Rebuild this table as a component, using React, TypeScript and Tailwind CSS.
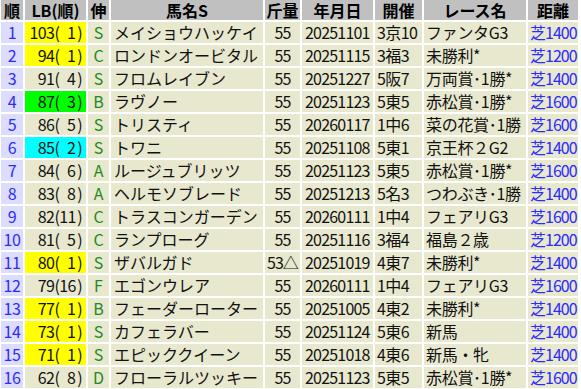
import React from "react";

type Row = {
  no: number;
  lb: number;
  rank: number;
  mark?: "y" | "g" | "c";
  nobi: string;
  name: string;
  kin: string;
  date: string;
  kaisai: string;
  race: string;
  dist: string;
};

const rows: Row[] = [
  { no: 1, lb: 103, rank: 1, mark: "y", nobi: "S", name: "メイショウハッケイ", kin: "55", date: "20251101", kaisai: "3京10", race: "ファンタG3", dist: "芝1400" },
  { no: 2, lb: 94, rank: 1, mark: "y", nobi: "C", name: "ロンドンオービタル", kin: "55", date: "20251115", kaisai: "3福3", race: "未勝利*", dist: "芝1200" },
  { no: 3, lb: 91, rank: 4, nobi: "S", name: "フロムレイブン", kin: "55", date: "20251227", kaisai: "5阪7", race: "万両賞･1勝*", dist: "芝1400" },
  { no: 4, lb: 87, rank: 3, mark: "g", nobi: "B", name: "ラヴノー", kin: "55", date: "20251123", kaisai: "5東5", race: "赤松賞･1勝*", dist: "芝1600" },
  { no: 5, lb: 86, rank: 5, nobi: "S", name: "トリスティ", kin: "55", date: "20260117", kaisai: "1中6", race: "菜の花賞･1勝", dist: "芝1600" },
  { no: 6, lb: 85, rank: 2, mark: "c", nobi: "S", name: "トワニ", kin: "55", date: "20251108", kaisai: "5東1", race: "京王杯２G2", dist: "芝1400" },
  { no: 7, lb: 84, rank: 6, nobi: "A", name: "ルージュブリッツ", kin: "55", date: "20251123", kaisai: "5東5", race: "赤松賞･1勝*", dist: "芝1600" },
  { no: 8, lb: 83, rank: 8, nobi: "A", name: "ヘルモソブレード", kin: "55", date: "20251213", kaisai: "5名3", race: "つわぶき･1勝", dist: "芝1400" },
  { no: 9, lb: 82, rank: 11, nobi: "C", name: "トラスコンガーデン", kin: "55", date: "20260111", kaisai: "1中4", race: "フェアリG3", dist: "芝1600" },
  { no: 10, lb: 81, rank: 5, nobi: "C", name: "ランプローグ", kin: "55", date: "20251116", kaisai: "3福4", race: "福島２歳", dist: "芝1200" },
  { no: 11, lb: 80, rank: 1, mark: "y", nobi: "S", name: "ザバルガド", kin: "53△", date: "20251019", kaisai: "4東7", race: "未勝利*", dist: "芝1400" },
  { no: 12, lb: 79, rank: 16, nobi: "F", name: "エゴンウレア", kin: "55", date: "20260111", kaisai: "1中4", race: "フェアリG3", dist: "芝1600" },
  { no: 13, lb: 77, rank: 1, mark: "y", nobi: "B", name: "フェーダーローター", kin: "55", date: "20251005", kaisai: "4東2", race: "未勝利*", dist: "芝1400" },
  { no: 14, lb: 73, rank: 1, mark: "y", nobi: "S", name: "カフェラバー", kin: "55", date: "20251124", kaisai: "5東6", race: "新馬", dist: "芝1400" },
  { no: 15, lb: 71, rank: 1, mark: "y", nobi: "S", name: "エピッククイーン", kin: "55", date: "20251018", kaisai: "4東6", race: "新馬・牝", dist: "芝1400" },
  { no: 16, lb: 62, rank: 8, nobi: "D", name: "フローラルツッキー", kin: "55", date: "20251123", kaisai: "5東5", race: "赤松賞･1勝*", dist: "芝1600" },
];

const headers = ["順", "LB(順)", "伸", "馬名S", "斤量", "年月日", "開催", "レース名", "距離"];

const lbBg = (m?: Row["mark"]) => {
  if (m === "y") return "bg-[#ffff00]";
  if (m === "g") return "bg-[#00ff00]";
  if (m === "c") return "bg-[#00ffff]";
  return "bg-[#e8e8cf]";
};

export default function App() {
  return (
    <div
      className="w-[581px] h-[389px] overflow-hidden bg-white text-[16px] leading-[21px] text-[#111]"
      style={{ fontFamily: '"Noto Sans CJK JP", "Noto Sans", sans-serif' }}
    >
      <div className="grid grid-cols-[22px_61px_21px_152px_35px_71px_47px_102px_50px] gap-[2px] pl-px">
        {headers.map((h) => (
          <div key={h} className="h-[20px] leading-[20px] bg-[#c0c0c0] text-center font-bold text-black whitespace-nowrap">
            {h}
          </div>
        ))}
        {rows.map((r) => (
          <React.Fragment key={r.no}>
            <div className="h-[21px] bg-[#dcdcfc] text-center text-[#2b2bff] tracking-[-0.5px]">{r.no}</div>
            <div className={`h-[21px] ${lbBg(r.mark)} flex justify-end pr-[4px] whitespace-nowrap tracking-[-0.6px]`}>
              <span>{r.lb}(</span>
              <span className="inline-block w-[16px] text-right">{r.rank}</span>
              <span className="pl-[2px]">)</span>
            </div>
            <div className="h-[21px] bg-[#e8e8cf] text-center text-[#1f8a1f]">{r.nobi}</div>
            <div className="h-[21px] bg-[#e8e8cf] pl-[3px] whitespace-nowrap overflow-hidden">{r.name}</div>
            <div className="h-[21px] bg-[#e8e8cf] text-center whitespace-nowrap tracking-[-1px]">{r.kin}</div>
            <div className="h-[21px] bg-[#e8e8cf] pl-[3px] whitespace-nowrap tracking-[-0.8px]">{r.date}</div>
            <div className="h-[21px] bg-[#e8e8cf] pl-[2px] whitespace-nowrap tracking-[-0.6px]">{r.kaisai}</div>
            <div className="h-[21px] bg-[#e8e8cf] pl-[2px] whitespace-nowrap overflow-hidden tracking-[-0.3px]">{r.race}</div>
            <div className="h-[21px] bg-[#e8e8cf] pl-[2px] whitespace-nowrap overflow-hidden text-[#2b2bff] tracking-[-1px]">{r.dist}</div>
          </React.Fragment>
        ))}
      </div>
    </div>
  );
}
